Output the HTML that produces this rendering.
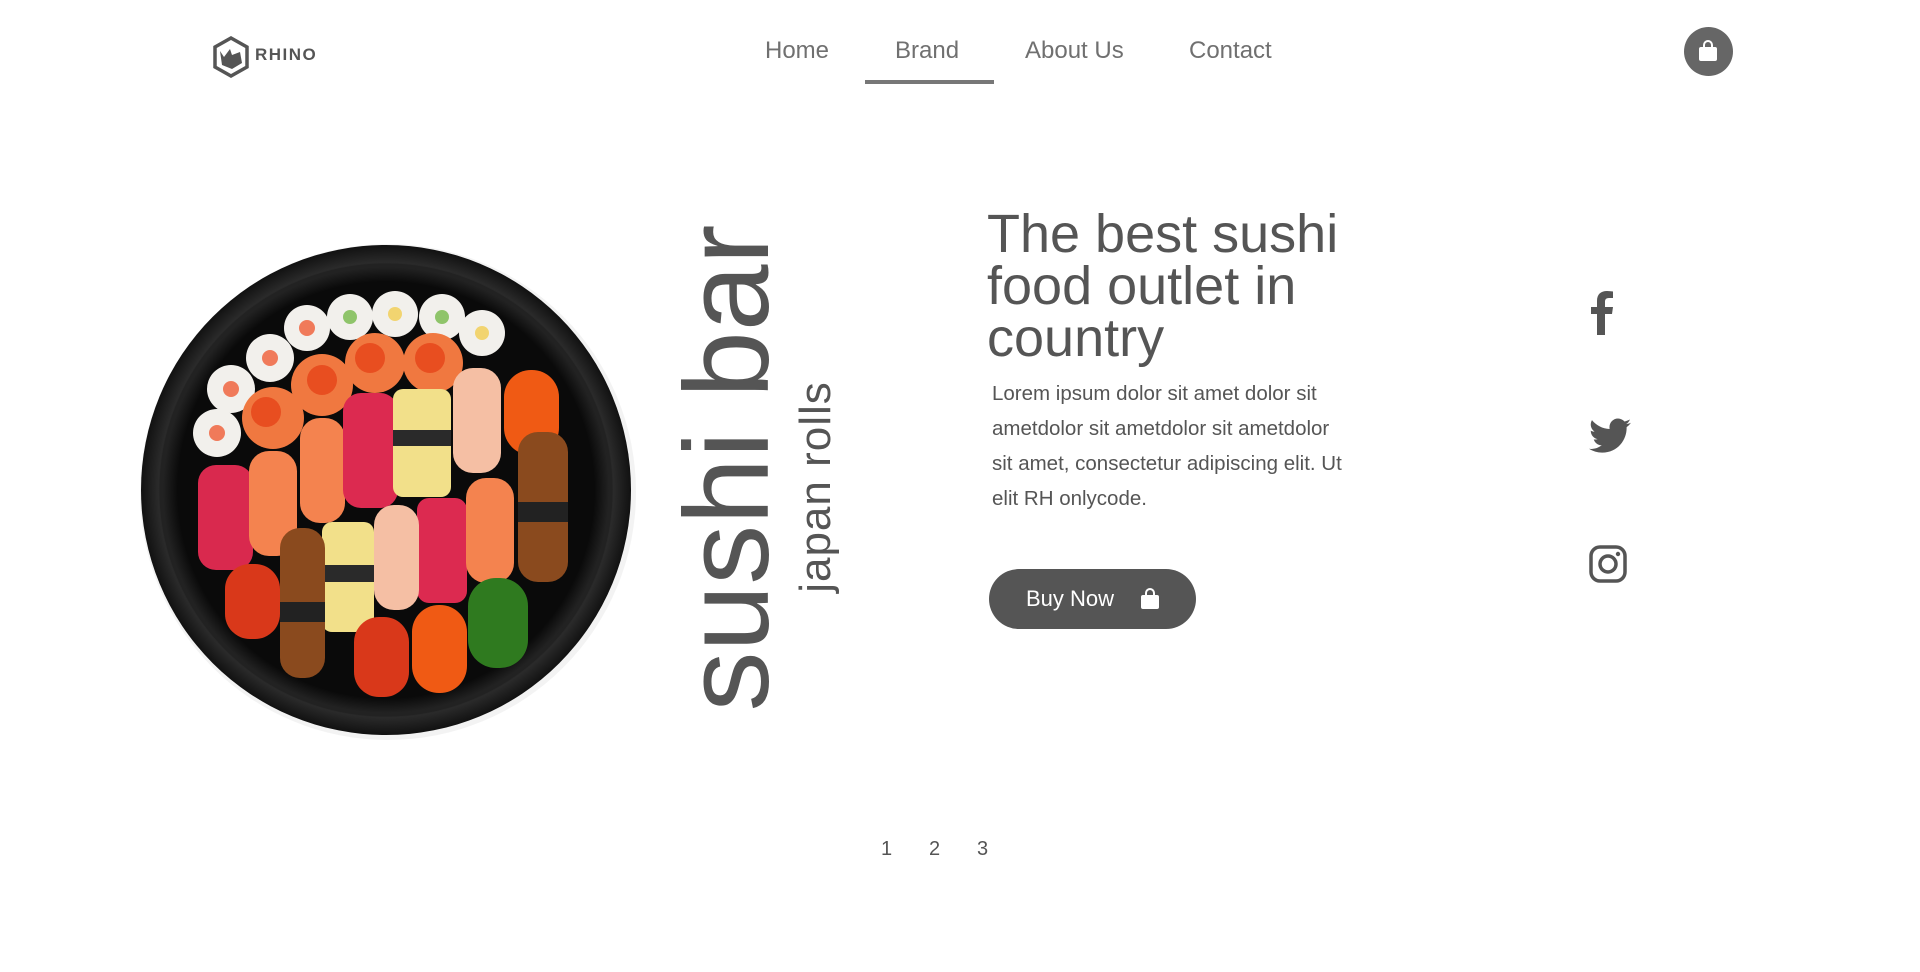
<!DOCTYPE html>
<html><head><meta charset="utf-8"><style>
*{margin:0;padding:0;box-sizing:border-box}
body{width:1920px;height:972px;background:#fff;position:relative;overflow:hidden;font-family:"Liberation Sans","DejaVu Sans",sans-serif;color:#555}
.a{position:absolute}
.nav a{position:absolute;top:37px;font-size:24px;color:#707070;text-decoration:none;white-space:nowrap}
.rot{position:absolute;transform:translate(-50%,-50%) rotate(-90deg);white-space:nowrap;line-height:1;color:#555}
h1{position:absolute;left:987px;top:208px;font-weight:normal;font-size:54px;line-height:52px;color:#555;white-space:nowrap}
p{position:absolute;left:992px;top:376px;font-size:20.5px;line-height:35px;color:#555;white-space:nowrap}
.btn{position:absolute;left:989px;top:569px;width:207px;height:60px;border-radius:30px;background:#555;color:#fff;font-size:22px;line-height:60px;padding-left:37px}
.pg{position:absolute;top:838px;font-size:20px;color:#555}
</style></head><body>
<svg class="a" style="left:210px;top:35px" width="42" height="44" viewBox="0 0 42 44"><path d="M21 3 L37 12 L37 32 L21 41 L5 32 L5 12 Z" fill="none" stroke="#555" stroke-width="3.5"/><path d="M10 16 L14 22 L20 14 L22 20 L30 17 L32 28 L22 34 L12 30 Z" fill="#555"/></svg>
<div class="a" style="left:255px;top:45px;font-size:17px;font-weight:bold;color:#555;letter-spacing:1.5px">RHINO</div>
<div class="nav"><a style="left:765px">Home</a><a style="left:895px">Brand</a><a style="left:1025px">About Us</a><a style="left:1189px">Contact</a></div>
<div class="a" style="left:865px;top:80px;width:129px;height:4px;background:#777"></div>
<div class="a" style="left:1684px;top:27px;width:49px;height:49px;border-radius:50%;background:#666"></div>
<svg class="a" style="left:1697px;top:39px" width="22" height="24" viewBox="0 0 22 24"><path d="M7 9 V6 a4 4 0 0 1 8 0 V9" fill="none" stroke="#fff" stroke-width="2"/><rect x="2" y="8" width="18" height="14" rx="2" fill="#fff"/></svg>

<svg class="a" style="left:140px;top:240px" width="500" height="500" viewBox="0 0 500 500">
<defs><radialGradient id="g" cx="50%" cy="50%" r="50%"><stop offset="0.85" stop-color="#0a0a0a"/><stop offset="0.93" stop-color="#2a2a2a"/><stop offset="1" stop-color="#111"/></radialGradient></defs>
<circle cx="248" cy="252" r="248" fill="#ddd" opacity=".35"/>
<circle cx="246" cy="250" r="245" fill="url(#g)"/>
<circle cx="246" cy="250" r="225" fill="none" stroke="#222" stroke-width="3"/>
<g fill="#f2f0ec"><circle cx="167" cy="88" r="23"/><circle cx="210" cy="77" r="23"/><circle cx="255" cy="74" r="23"/><circle cx="302" cy="77" r="23"/><circle cx="342" cy="93" r="23"/><circle cx="130" cy="118" r="24"/><circle cx="91" cy="149" r="24"/><circle cx="77" cy="193" r="24"/></g>
<g fill="#f07a5a"><circle cx="167" cy="88" r="8"/><circle cx="130" cy="118" r="8"/><circle cx="91" cy="149" r="8"/><circle cx="77" cy="193" r="8"/></g>
<g fill="#8fc46a"><circle cx="210" cy="77" r="7"/><circle cx="302" cy="77" r="7"/></g>
<g fill="#f2d470"><circle cx="255" cy="74" r="7"/><circle cx="342" cy="93" r="7"/></g>
<g fill="#f07840"><circle cx="182" cy="145" r="31"/><circle cx="133" cy="178" r="31"/><circle cx="235" cy="123" r="30"/><circle cx="293" cy="123" r="30"/></g>
<g fill="#e84e20"><circle cx="182" cy="140" r="15"/><circle cx="126" cy="172" r="15"/><circle cx="230" cy="118" r="15"/><circle cx="290" cy="118" r="15"/></g>
<g>
<rect x="58" y="225" width="55" height="105" rx="18" fill="#d9294e"/>
<rect x="109" y="211" width="48" height="105" rx="20" fill="#f4834f"/>
<rect x="160" y="178" width="45" height="105" rx="20" fill="#f4834f"/>
<rect x="203" y="153" width="55" height="115" rx="18" fill="#dc2a50"/>
<rect x="253" y="149" width="58" height="108" rx="10" fill="#f2e08a"/><rect x="253" y="190" width="58" height="16" fill="#2a2a2a"/>
<rect x="313" y="128" width="48" height="105" rx="20" fill="#f5bfa4"/>
<rect x="364" y="130" width="55" height="85" rx="27" fill="#f05a14"/>
<rect x="378" y="192" width="50" height="150" rx="20" fill="#8a4a1e"/><rect x="378" y="262" width="50" height="20" fill="#222"/>
<rect x="277" y="258" width="50" height="105" rx="12" fill="#dc2a50"/>
<rect x="326" y="238" width="48" height="105" rx="20" fill="#f4834f"/>
<rect x="234" y="265" width="45" height="105" rx="20" fill="#f5bfa4"/>
<rect x="182" y="282" width="52" height="110" rx="10" fill="#f2e08a"/><rect x="182" y="325" width="52" height="17" fill="#2a2a2a"/>
<rect x="140" y="288" width="45" height="150" rx="20" fill="#8a4a1e"/><rect x="140" y="362" width="45" height="20" fill="#222"/>
<rect x="85" y="324" width="55" height="75" rx="25" fill="#d9381a"/>
<rect x="214" y="377" width="55" height="80" rx="25" fill="#d9381a"/>
<rect x="272" y="365" width="55" height="88" rx="27" fill="#f05a14"/>
<rect x="328" y="338" width="60" height="90" rx="28" fill="#2f7a1f"/>
</g>
</svg>

<div class="rot" style="left:727px;top:468px;font-size:120px">sushi bar</div>
<div class="rot" style="left:816px;top:487px;font-size:44px;letter-spacing:1px">japan rolls</div>

<h1>The best sushi<br>food outlet in<br>country</h1>
<p>Lorem ipsum dolor sit amet dolor sit<br>ametdolor sit ametdolor sit ametdolor<br>sit amet, consectetur adipiscing elit. Ut<br>elit RH onlycode.</p>
<div class="btn">Buy Now</div>
<svg class="a" style="left:1139px;top:587px" width="22" height="24" viewBox="0 0 22 24"><path d="M7 9 V6 a4 4 0 0 1 8 0 V9" fill="none" stroke="#fff" stroke-width="2"/><rect x="2" y="8" width="18" height="14" rx="2" fill="#fff"/></svg>

<svg class="a" style="left:1588px;top:290px" width="30" height="45" viewBox="0 0 30 45"><path d="M9 45 V24 H3 V17 H9 V11 C9 4 13 1 19 1 C22 1 24 1.5 25 1.5 V8 H21 C17.5 8 17 10 17 12 V17 H25 L24 24 H17 V45 Z" fill="#555"/></svg>
<svg class="a" style="left:1589px;top:418px" width="42" height="36" viewBox="0 0 24 20"><path d="M24 2.4c-.9.4-1.8.6-2.8.8 1-.6 1.8-1.600 2.2-2.7-1 .6-2 1-3.1 1.2C19.3.7 18 0 16.6 0c-2.7 0-4.900 2.2-4.900 4.900 0 .4 0 .8.1 1.1C7.7 5.8 4.1 3.900 1.7.9c-.4.7-.7 1.6-.7 2.5 0 1.7.9 3.2 2.2 4.1-.8 0-1.6-.2-2.2-.6v.1c0 2.4 1.7 4.4 3.900 4.8-.4.1-.8.2-1.3.2-.3 0-.6 0-.9-.1.6 2 2.4 3.4 4.6 3.4-1.7 1.3-3.8 2.1-6.1 2.1-.4 0-.8 0-1.2-.1 2.200 1.4 4.8 2.2 7.5 2.2 9.1 0 14-7.5 14-14v-.6c1-.7 1.8-1.6 2.5-2.5z" fill="#555"/></svg>
<svg class="a" style="left:1589px;top:545px" width="38" height="38" viewBox="0 0 38 38"><rect x="2" y="2" width="34" height="34" rx="9" fill="none" stroke="#555" stroke-width="3.5"/><circle cx="19" cy="19" r="8" fill="none" stroke="#555" stroke-width="3.5"/><circle cx="29" cy="9" r="2.2" fill="#555"/></svg>

<div class="pg" style="left:881px">1</div><div class="pg" style="left:929px">2</div><div class="pg" style="left:977px">3</div>
</body></html>
